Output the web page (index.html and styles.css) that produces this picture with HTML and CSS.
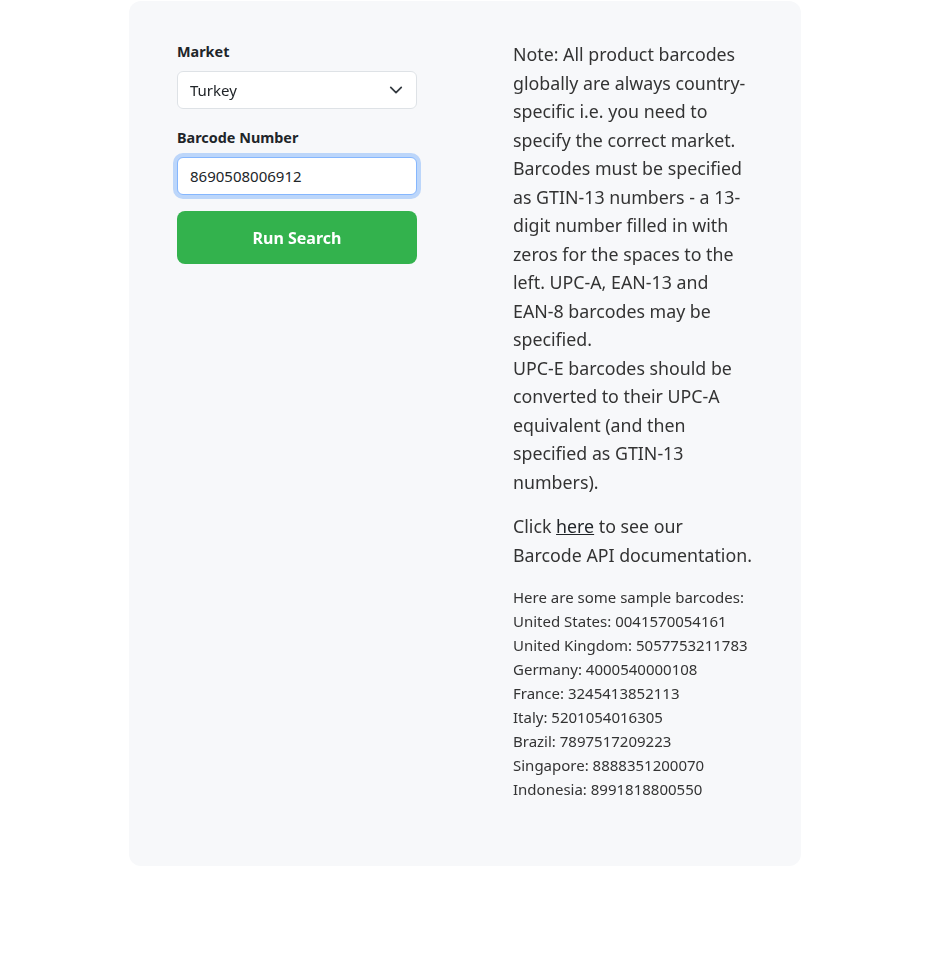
FILE: index.html
```html
<!DOCTYPE html>
<html lang="en">
<head>
<meta charset="utf-8">
<title>Barcode Search</title>
<link rel="stylesheet" href="styles.css">
</head>
<body>
<div class="card">
  <form class="form">
    <label class="label" for="market">Market</label>
    <div class="select-wrap">
      <select id="market" class="control select">
        <option>Turkey</option>
      </select>
      <svg class="chevron" width="14" height="14" viewBox="0 0 16 16" aria-hidden="true"><path d="M2 5l6 6 6-6" fill="none" stroke="#343a40" stroke-width="2" stroke-linecap="round" stroke-linejoin="round"/></svg>
    </div>
    <label class="label" for="barcode">Barcode Number</label>
    <input id="barcode" class="control input focused" type="text" value="8690508006912" autofocus>
    <button type="button" class="btn">Run Search</button>
  </form>
  <div class="info">
    <p class="note">Note: All product barcodes globally are always country-specific i.e. you need to specify the correct market. Barcodes must be specified as GTIN-13 numbers - a 13-digit number filled in with zeros for the spaces to the left. UPC-A, EAN-13 and EAN-8 barcodes may be specified.<br>UPC-E barcodes should be converted to their UPC-A equivalent (and then specified as GTIN-13 numbers).</p>
    <p class="note">Click <a href="#" class="link">here</a> to see our Barcode API documentation.</p>
    <p class="samples">Here are some sample barcodes:<br>United States: 0041570054161<br>United Kingdom: 5057753211783<br>Germany: 4000540000108<br>France: 3245413852113<br>Italy: 5201054016305<br>Brazil: 7897517209223<br>Singapore: 8888351200070<br>Indonesia: 8991818800550</p>
  </div>
</div>
</body>
</html>
```
FILE: styles.css
```css
* { box-sizing: border-box; }
html, body { margin: 0; background: #fff; }
body {
  font-family: "Segoe UI", "Noto Sans", sans-serif;
  color: #212529;
  padding-top: 1px;
}
.card {
  width: 672px;
  margin: 0 auto 0 129px;
  background: #f7f8fa;
  border-radius: 12px;
  padding: 39px 48px 49px;
  display: grid;
  grid-template-columns: 240px 240px;
  column-gap: 96px;
  align-items: start;
}
.form { display: flex; flex-direction: column; }
.label {
  font-size: 14.4px;
  font-weight: 700;
  line-height: 22px;
  padding-top: 1px;
  margin-bottom: 8px;
}
.control {
  width: 240px;
  height: 38px;
  border: 1px solid #dee2e6;
  border-radius: 6px;
  background: #fff;
  font-family: inherit;
  font-size: 15px;
  color: #212529;
  padding: 0 12px;
  margin-bottom: 17px;
}
.select-wrap { position: relative; }
.select { appearance: none; -webkit-appearance: none; display: block; }
.chevron { position: absolute; right: 14px; top: 12px; pointer-events: none; }
.input { outline: none; caret-color: #000; }
.input.focused {
  border-color: #86b7fe;
  box-shadow: 0 0 0 4px rgba(13, 110, 253, 0.25);
  margin-bottom: 16px;
}
.btn {
  height: 53px;
  width: 240px;
  border: 0;
  border-radius: 8px;
  background: #33b24d;
  color: #fff;
  font-family: inherit;
  font-size: 16px;
  font-weight: 700;
  cursor: pointer;
}
.info { color: #333; }
.note {
  margin: 0 0 16px;
  font-size: 17.8px;
  line-height: 28.5px;
}
.samples {
  margin: 0 0 16px;
  font-size: 15px;
  line-height: 24px;
}
.link { color: #212529; text-decoration: underline; }
```
